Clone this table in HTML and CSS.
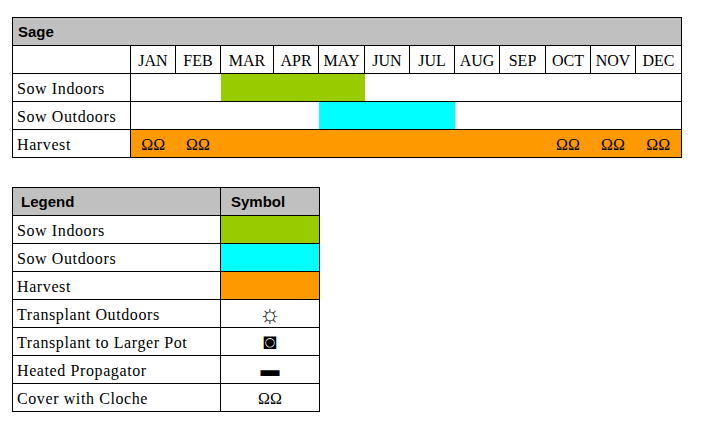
FILE: index.html
```html
<!DOCTYPE html>
<html>
<head>
<meta charset="utf-8">
<link rel="stylesheet" href="styles.css">
</head>
<body>
<table class="cal">
  <colgroup>
    <col class="c-label">
    <col class="c45"><col class="c45"><col class="c53"><col class="c45"><col class="c46"><col class="c45">
    <col class="c45"><col class="c45"><col class="c46"><col class="c45"><col class="c45"><col class="c46">
  </colgroup>
  <tr class="head"><th colspan="13">Sage</th></tr>
  <tr class="months">
    <td class="label"></td>
    <td>JAN</td><td>FEB</td><td>MAR</td><td>APR</td><td>MAY</td><td>JUN</td>
    <td>JUL</td><td>AUG</td><td>SEP</td><td>OCT</td><td>NOV</td><td>DEC</td>
  </tr>
  <tr class="data">
    <td class="label">Sow Indoors</td>
    <td colspan="2"></td>
    <td colspan="3" class="green"></td>
    <td colspan="7"></td>
  </tr>
  <tr class="data">
    <td class="label">Sow Outdoors</td>
    <td colspan="4"></td>
    <td colspan="3" class="cyan"></td>
    <td colspan="5"></td>
  </tr>
  <tr class="data harvest">
    <td class="label">Harvest</td>
    <td class="orange">ΩΩ</td><td class="orange">ΩΩ</td>
    <td class="orange"></td><td class="orange"></td><td class="orange"></td><td class="orange"></td>
    <td class="orange"></td><td class="orange"></td><td class="orange"></td>
    <td class="orange">ΩΩ</td><td class="orange">ΩΩ</td><td class="orange">ΩΩ</td>
  </tr>
</table>

<table class="legend">
  <colgroup><col class="l-name"><col class="l-sym"></colgroup>
  <tr class="head"><th>Legend</th><th>Symbol</th></tr>
  <tr><td>Sow Indoors</td><td class="green"></td></tr>
  <tr><td>Sow Outdoors</td><td class="cyan"></td></tr>
  <tr><td>Harvest</td><td class="orange"></td></tr>
  <tr><td>Transplant Outdoors</td><td class="sym sun">☼</td></tr>
  <tr><td>Transplant to Larger Pot</td><td class="sym pot">◙</td></tr>
  <tr><td>Heated Propagator</td><td class="sym bar">▬</td></tr>
  <tr><td>Cover with Cloche</td><td class="sym">ΩΩ</td></tr>
</table>
</body>
</html>
```

FILE: styles.css
```css
html, body {
  margin: 0;
  background: #ffffff;
}
body {
  padding: 17px 0 0 12px;
  font-family: "Liberation Serif", "Times New Roman", serif;
  font-size: 16px;
  color: #000;
}
table {
  border-collapse: collapse;
  table-layout: fixed;
  border: 1px solid #000;
}
.cal { width: 670px; }
.c-label { width: 118px; }
.c45 { width: 45px; }
.c46 { width: 46px; }
.c53 { width: 53px; }
tr { height: 28px; }
td, th {
  padding: 2px 0 0 4px;
  overflow: hidden;
  white-space: nowrap;
}
td.label, .legend td:first-child {
  letter-spacing: 0.6px;
}
.head th {
  background: #c0c0c0;
  font-family: "Liberation Sans", Arial, sans-serif;
  font-size: 15px;
  font-weight: bold;
  text-align: left;
  padding: 0 0 0 5px;
  border: 1px solid #000;
}
.months td {
  text-align: center;
  padding: 2px 0 0 0;
  border: 1px solid #000;
}
.data td {
  border-top: 1px solid #000;
  border-bottom: 1px solid #000;
}
.data td.label {
  border-right: 1px solid #000;
}
.harvest td.orange {
  text-align: center;
  padding: 2px 0 0 0;
}
.green { background: #99cc00; }
.cyan { background: #00ffff; }
.orange { background: #ff9900; }

.legend {
  width: 307px;
  margin-top: 29px;
}
.l-name { width: 208px; }
.l-sym { width: 99px; }
.legend td {
  border: 1px solid #000;
}
.legend .head th {
  padding-left: 8px;
}
.legend .head th + th {
  padding-left: 10px;
}
.legend td.sym {
  text-align: center;
  padding: 2px 0 0 0;
}
.legend td.sun {
  font-size: 24px;
  line-height: 1;
  padding: 0;
}
.legend td.pot {
  font-size: 22px;
  line-height: 1;
  padding: 0;
}
.legend td.bar {
  font-size: 19px;
  line-height: 1;
  padding: 0;
}
```
